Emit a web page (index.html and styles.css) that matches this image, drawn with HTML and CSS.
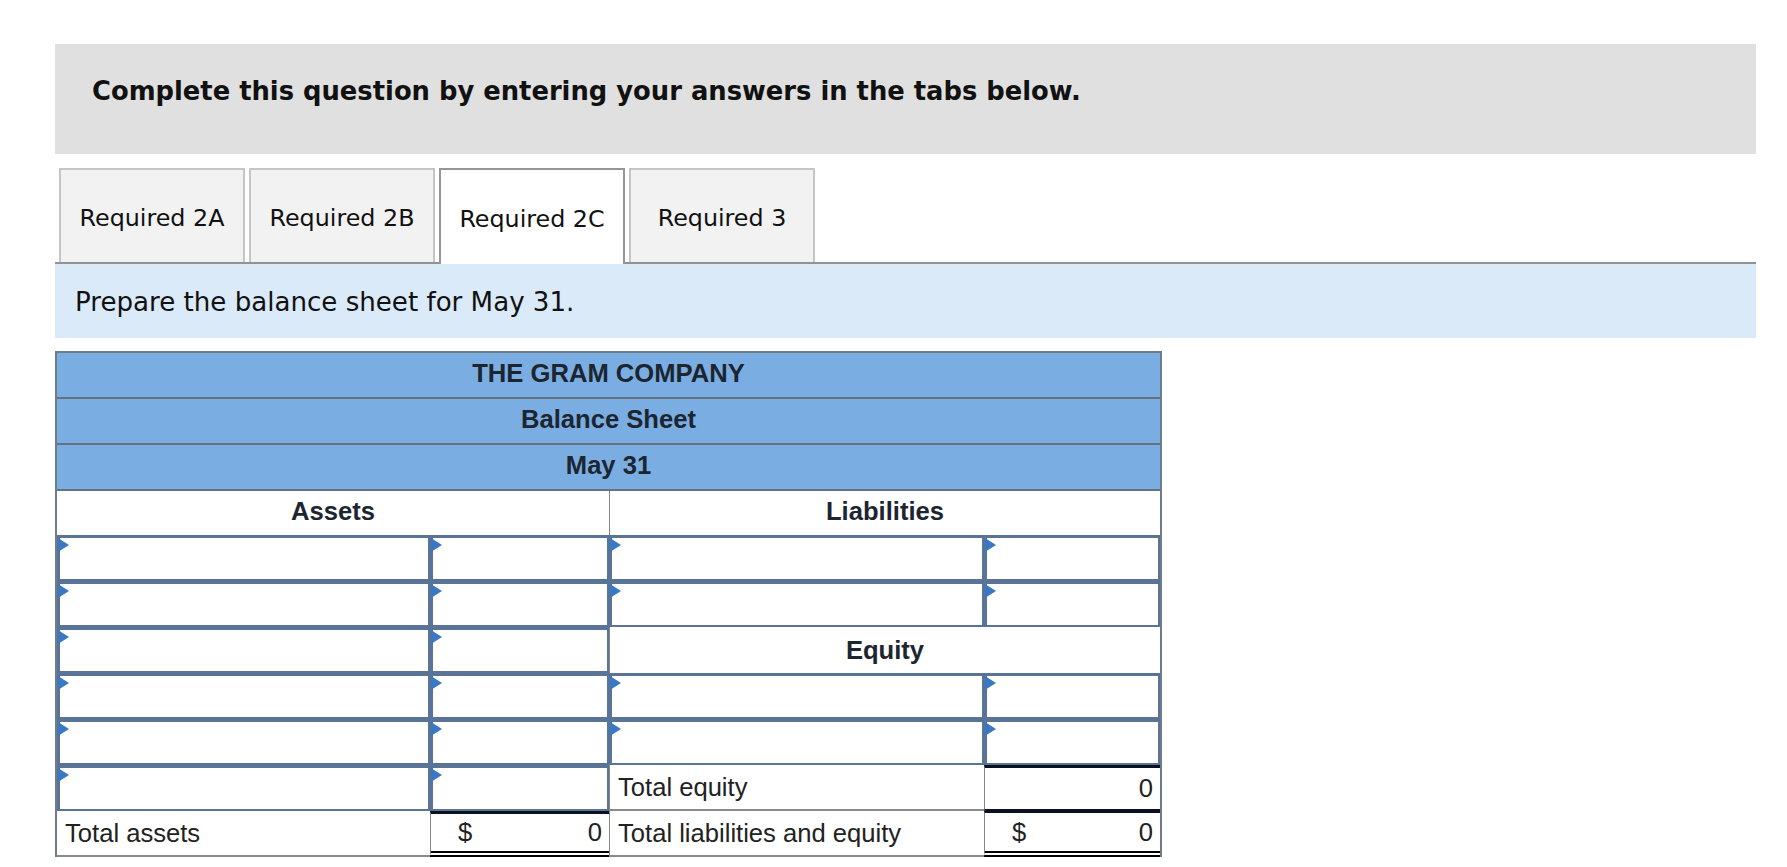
FILE: index.html
```html
<!DOCTYPE html>
<html lang="en">
<head>
<meta charset="utf-8">
<title>Balance Sheet</title>
<link rel="stylesheet" href="styles.css">
</head>
<body>
<div class="page">
  <div class="prompt">Complete this question by entering your answers in the tabs below.</div>
  <div class="tabs">
    <div class="tab">Required 2A</div>
    <div class="tab">Required 2B</div>
    <div class="tab active">Required 2C</div>
    <div class="tab">Required 3</div>
  </div>
  <div class="instr">Prepare the balance sheet for May 31.</div>
  <div class="sheet">
    <div class="head-row">THE GRAM COMPANY</div>
    <div class="head-row">Balance Sheet</div>
    <div class="head-row">May 31</div>
    <div class="grid">
      <div class="colhead">Assets</div>
      <div class="colhead divide">Liabilities</div>

      <div class="inp"></div><div class="inp"></div><div class="inp"></div><div class="inp"></div>
      <div class="inp"></div><div class="inp"></div><div class="inp"></div><div class="inp"></div>
      <div class="inp"></div><div class="inp"></div><div class="equity">Equity</div>
      <div class="inp"></div><div class="inp"></div><div class="inp"></div><div class="inp"></div>
      <div class="inp"></div><div class="inp"></div><div class="inp"></div><div class="inp"></div>
      <div class="inp"></div><div class="inp"></div>
      <div class="label divide">Total equity</div>
      <div class="amount subtotal divide"><span></span><span>0</span></div>

      <div class="label">Total assets</div>
      <div class="amount total divide"><span>$</span><span>0</span></div>
      <div class="label divide">Total liabilities and equity</div>
      <div class="amount total divide"><span>$</span><span>0</span></div>
    </div>
  </div>
</div>
</body>
</html>
```

FILE: styles.css
```css
html, body {
  margin: 0;
  background: #ffffff;
}

.page {
  padding: 44px 31px 0 55px;
}

.prompt {
  height: 110px;
  box-sizing: border-box;
  padding: 32px 37px 0;
  background: #e0e0e0;
  color: #111111;
  font-family: "DejaVu Sans", Verdana, sans-serif;
  font-weight: bold;
  font-size: 25.8px;
}

.tabs {
  margin-top: 14px;
  height: 94px;
  display: flex;
  gap: 4px;
  padding-left: 4px;
  border-bottom: 2px solid #8f9297;
}

.tab {
  width: 186px;
  box-sizing: border-box;
  padding-top: 4px;
  border: 2px solid #c4c4c4;
  border-bottom: none;
  background: #f2f2f2;
  display: flex;
  align-items: center;
  justify-content: center;
  color: #111111;
  font-family: "DejaVu Sans", Verdana, sans-serif;
  font-size: 23.8px;
}

.tab.active {
  background: #ffffff;
  border-color: #969696;
  margin-bottom: -2px;
  position: relative;
}

.instr {
  height: 74px;
  box-sizing: border-box;
  padding: 2px 0 0 20px;
  display: flex;
  align-items: center;
  background: #dbeaf8;
  color: #111111;
  font-family: "DejaVu Sans", Verdana, sans-serif;
  font-size: 26.1px;
}

.sheet {
  margin-top: 13px;
  width: 1107px;
  box-sizing: border-box;
  border: 2px solid #6f7c8a;
  border-bottom: none;
  font-family: "Liberation Sans", Arial, sans-serif;
  font-size: 25.6px;
  color: #222222;
}

.head-row {
  height: 46px;
  box-sizing: border-box;
  padding-bottom: 3px;
  border-bottom: 2px solid #66727f;
  background: #7aade1;
  display: flex;
  align-items: center;
  justify-content: center;
  font-weight: bold;
  color: #1c2530;
}

.grid {
  display: grid;
  grid-template-columns: 373px 179px 375px 176px;
  grid-template-rows: 44px repeat(7, 46px);
}

.grid > div {
  box-sizing: border-box;
  min-width: 0;
}

.colhead {
  grid-column: span 2;
  display: flex;
  align-items: center;
  justify-content: center;
  padding-bottom: 3px;
  font-weight: bold;
  color: #1c2530;
}

.divide {
  border-left: 1px solid #858585;
}

.inp {
  position: relative;
  background: #ffffff;
  border-style: solid;
  border-color: #5a7497;
  border-width: 3px 2px 2px 3px;
}

.inp::before {
  content: "";
  position: absolute;
  left: -2px;
  top: 0;
  border-left: 11px solid #3a78c3;
  border-top: 7px solid transparent;
  border-bottom: 7px solid transparent;
}

.equity {
  grid-column: 3 / span 2;
  display: flex;
  align-items: center;
  justify-content: center;
  font-weight: bold;
  color: #1c2530;
  border-left: 1px solid #858585;
}

.label {
  display: flex;
  align-items: center;
  padding-left: 8px;
  white-space: nowrap;
  border-bottom: 2px solid #8a8a8a;
}

.amount {
  display: flex;
  align-items: center;
  justify-content: space-between;
  padding: 0 7px 0 27px;
}

.amount.subtotal {
  border-top: 3px solid #0b1020;
  border-bottom: 2px solid #0b1020;
}

.amount.total {
  border-top: 2px solid #0b1020;
  border-bottom: 6px double #000000;
}

.grid > .amount.total:nth-last-child(3) {
  border-top-width: 3px;
}
```
